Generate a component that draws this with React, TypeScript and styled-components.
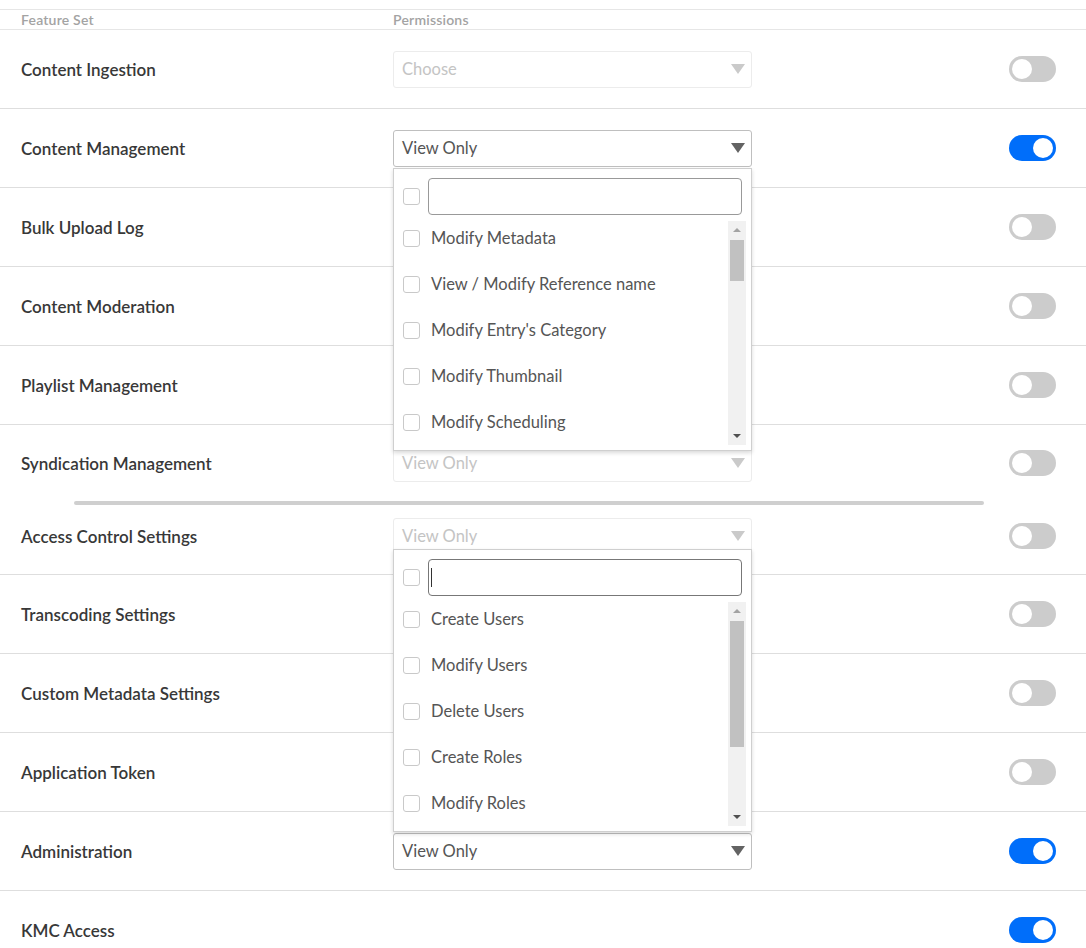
import React from 'react';
import styled, { createGlobalStyle, css } from 'styled-components';

const GlobalStyle = createGlobalStyle`
  body {
    margin: 0;
    background: #fff;
    font-family: Lato, "Open Sans", Arial, sans-serif;
  }
`;

type SelectState = 'placeholder' | 'disabled' | 'active';

interface PopupSpec {
  items: string[];
  offset: number;
  thumb: number;
  focused?: boolean;
}

interface RowSpec {
  label: string;
  select?: { text: string; state: SelectState };
  on: boolean;
  popup?: PopupSpec;
  clipped?: boolean;
  height?: number;
}

const metadataItems = [
  'Modify Metadata',
  'View / Modify Reference name',
  "Modify Entry's Category",
  'Modify Thumbnail',
  'Modify Scheduling',
];

const adminItems = ['Create Users', 'Modify Users', 'Delete Users', 'Create Roles', 'Modify Roles'];

const topRows: RowSpec[] = [
  { label: 'Content Ingestion', select: { text: 'Choose', state: 'placeholder' }, on: false },
  {
    label: 'Content Management',
    select: { text: 'View Only', state: 'active' },
    on: true,
    popup: { items: metadataItems, offset: 38, thumb: 41 },
  },
  { label: 'Bulk Upload Log', on: false },
  { label: 'Content Moderation', on: false },
  { label: 'Playlist Management', on: false },
  {
    label: 'Syndication Management',
    select: { text: 'View Only', state: 'disabled' },
    on: false,
    height: 76,
  },
];

const bottomRows: RowSpec[] = [
  {
    label: 'Access Control Settings',
    select: { text: 'View Only', state: 'disabled' },
    on: false,
    clipped: true,
    popup: { items: adminItems, offset: 31, thumb: 126, focused: true },
  },
  { label: 'Transcoding Settings', on: false },
  { label: 'Custom Metadata Settings', on: false },
  { label: 'Application Token', on: false },
  { label: 'Administration', select: { text: 'View Only', state: 'active' }, on: true },
  { label: 'KMC Access', on: true },
];

const Page = styled.div`
  width: 1086px;
  padding-top: 9px;
`;

const Columns = css`
  display: grid;
  grid-template-columns: 372px 359px 1fr;
  align-items: center;
  padding: 0 30px 0 21px;
  box-sizing: border-box;
`;

const Header = styled.div`
  ${Columns};
  height: 21px;
  border-top: 1px solid #e6e6e6;
  border-bottom: 1px solid #e6e6e6;
`;

const HeaderCell = styled.div`
  font-size: 14px;
  font-weight: 600;
  letter-spacing: 0.2px;
  color: #a3a3a3;
`;

const Row = styled.div<{ $height: number; $clipped?: boolean; $last?: boolean }>`
  ${Columns};
  height: ${(p) => p.$height}px;
  border-bottom: ${(p) => (p.$last ? 'none' : '1px solid #dedede')};
  padding-bottom: ${(p) => (p.$clipped ? 7 : 0)}px;
`;

const Label = styled.div`
  font-size: 17px;
  font-weight: 600;
  color: #383838;
`;

const SelectWrap = styled.div`
  position: relative;
  height: 37px;
`;

const SelectBox = styled.div<{ $state: SelectState }>`
  height: 37px;
  box-sizing: border-box;
  display: flex;
  align-items: center;
  justify-content: space-between;
  padding: 0 6px 0 8px;
  border-radius: 3px;
  font-size: 16.5px;
  border: 1px solid ${(p) => (p.$state === 'active' ? '#bfbfbf' : '#ececec')};
  color: ${(p) => (p.$state === 'active' ? '#555' : '#c4c4c4')};
  background: #fff;
`;

const Arrow = styled.span<{ $state: SelectState }>`
  width: 0;
  height: 0;
  border-left: 7px solid transparent;
  border-right: 7px solid transparent;
  border-top: 10px solid ${(p) => (p.$state === 'active' ? '#636363' : '#cacaca')};
`;

const Popup = styled.div<{ $offset: number }>`
  position: absolute;
  z-index: 10;
  top: ${(p) => p.$offset}px;
  left: 0;
  width: 359px;
  height: 283px;
  box-sizing: border-box;
  background: #fff;
  border: 1px solid #cfcfcf;
  box-shadow: 0 2px 4px rgba(0, 0, 0, 0.15);
  padding-top: 9px;
`;

const SearchRow = styled.div`
  display: flex;
  align-items: center;
  gap: 8px;
  padding: 0 9px;
`;

const Checkbox = styled.span`
  width: 17px;
  height: 17px;
  flex: none;
  box-sizing: border-box;
  border: 1px solid #c9c9c9;
  border-radius: 3px;
  background: #fff;
`;

const SearchBox = styled.div<{ $focused?: boolean }>`
  flex: 1;
  height: 37px;
  box-sizing: border-box;
  border: 1px solid ${(p) => (p.$focused ? '#777' : '#999')};
  border-radius: 4px;
  display: flex;
  align-items: center;
  padding-left: 2px;

  ${(p) =>
    p.$focused &&
    css`
      &::before {
        content: '';
        width: 1px;
        height: 19px;
        background: #333;
      }
    `}
`;

const ListArea = styled.div`
  display: flex;
  margin-top: 6px;
  height: 224px;
  padding: 0 5px 0 9px;
`;

const Items = styled.div`
  flex: 1;
`;

const Item = styled.div`
  height: 46px;
  box-sizing: border-box;
  padding-bottom: 10px;
  display: flex;
  align-items: center;
  gap: 11px;
  font-size: 16.5px;
  color: #555;
  line-height: 17px;
`;

const Track = styled.div`
  position: relative;
  width: 18px;
  background: #f1f1f1;
`;

const ScrollArrow = styled.span<{ $down?: boolean }>`
  position: absolute;
  left: 5px;
  width: 0;
  height: 0;
  border-left: 4px solid transparent;
  border-right: 4px solid transparent;
  ${(p) =>
    p.$down
      ? css`
          bottom: 7px;
          border-top: 4px solid #505050;
        `
      : css`
          top: 7px;
          border-bottom: 4px solid #a3a3a3;
        `}
`;

const Thumb = styled.div`
  position: absolute;
  top: 19px;
  left: 2px;
  right: 2px;
  background: #c1c1c1;
`;

const ToggleCell = styled.div`
  display: flex;
  justify-content: flex-end;
`;

const Toggle = styled.div<{ $on: boolean }>`
  width: 47px;
  height: 26px;
  border-radius: 13px;
  box-sizing: border-box;
  padding: 3px;
  display: flex;
  justify-content: ${(p) => (p.$on ? 'flex-end' : 'flex-start')};
  background: ${(p) => (p.$on ? '#006efa' : '#cccccc')};
`;

const Knob = styled.span`
  width: 20px;
  height: 20px;
  border-radius: 50%;
  background: #fff;
`;

const Divider = styled.div`
  height: 4px;
  margin: 0 102px 0 74px;
  background: #cfcfcf;
  border-radius: 2px;
`;

const PermissionPopup: React.FC<PopupSpec> = ({ items, offset, thumb, focused }) => (
  <Popup $offset={offset}>
    <SearchRow>
      <Checkbox />
      <SearchBox $focused={focused} />
    </SearchRow>
    <ListArea>
      <Items>
        {items.map((item) => (
          <Item key={item}>
            <Checkbox />
            {item}
          </Item>
        ))}
      </Items>
      <Track>
        <ScrollArrow />
        <Thumb style={{ height: thumb }} />
        <ScrollArrow $down />
      </Track>
    </ListArea>
  </Popup>
);

const FeatureRow: React.FC<{ row: RowSpec; last?: boolean }> = ({ row, last }) => (
  <Row $height={row.height ?? (row.clipped ? 70 : 79)} $clipped={row.clipped} $last={last}>
    <Label>{row.label}</Label>
    <SelectWrap>
      {row.select && (
        <SelectBox $state={row.select.state}>
          {row.select.text}
          <Arrow $state={row.select.state} />
        </SelectBox>
      )}
      {row.popup && <PermissionPopup {...row.popup} />}
    </SelectWrap>
    <ToggleCell>
      <Toggle $on={row.on}>
        <Knob />
      </Toggle>
    </ToggleCell>
  </Row>
);

export default function App() {
  return (
    <Page>
      <GlobalStyle />
      <Header>
        <HeaderCell>Feature Set</HeaderCell>
        <HeaderCell>Permissions</HeaderCell>
      </Header>
      {topRows.map((row, i) => (
        <FeatureRow key={row.label} row={row} last={i === topRows.length - 1} />
      ))}
      <Divider />
      {bottomRows.map((row) => (
        <FeatureRow key={row.label} row={row} />
      ))}
    </Page>
  );
}
